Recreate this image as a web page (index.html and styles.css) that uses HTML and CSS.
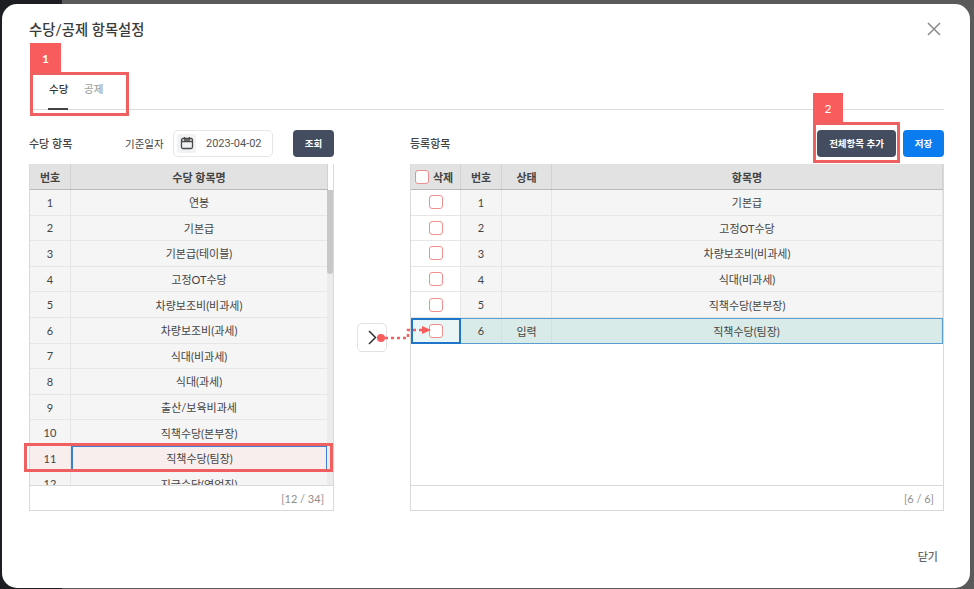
FILE: index.html
```html
<!DOCTYPE html>
<html lang="ko">
<head>
<meta charset="utf-8">
<title>수당/공제 항목설정</title>
<link rel="stylesheet" href="styles.css">
</head>
<body>
<div class="modal">
  <header class="modal-head">
    <h1 class="title">수당/공제 항목설정</h1>
    <svg class="close" width="14" height="14" viewBox="0 0 14 14"><path d="M1 1l12 12M13 1L1 13" stroke="#8a8a8a" stroke-width="1.5" fill="none"/></svg>
  </header>
  <nav class="tabs">
    <span class="tab active">수당</span>
    <span class="tab">공제</span>
  </nav>
  <section class="content">
    <div class="toolbar left-tools">
      <strong class="label">수당 항목</strong>
      <span class="date-label">기준일자</span>
      <div class="date">
        <span class="date-icon"><svg width="14" height="14" viewBox="0 0 14 14" fill="none" stroke="#4a4a4a" stroke-width="1.3"><rect x="1.5" y="2.5" width="11" height="10" rx="1.5"/><path d="M1.5 5.5h11M4.500 1v2.500M9.500 1v2.500"/><path d="M4 4h6" stroke-width="1.500"/></svg></span>
        <span class="date-value">2023-04-02</span>
      </div>
      <button class="btn dark search">조회</button>
    </div>
    <div></div>
    <div class="toolbar right-tools">
      <strong class="label">등록항목</strong>
      <button class="btn dark add">전체항목 추가</button>
      <button class="btn blue save">저장</button>
    </div>

    <div class="grid">
      <div class="row head lcols"><span>번호</span><span>수당 항목명</span></div>
      <div class="body">
        <div class="row lcols"><span>1</span><span>연봉</span></div>
        <div class="row lcols"><span>2</span><span>기본급</span></div>
        <div class="row lcols"><span>3</span><span>기본급(테이블)</span></div>
        <div class="row lcols"><span>4</span><span>고정OT수당</span></div>
        <div class="row lcols"><span>5</span><span>차량보조비(비과세)</span></div>
        <div class="row lcols"><span>6</span><span>차량보조비(과세)</span></div>
        <div class="row lcols"><span>7</span><span>식대(비과세)</span></div>
        <div class="row lcols"><span>8</span><span>식대(과세)</span></div>
        <div class="row lcols"><span>9</span><span>출산/보육비과세</span></div>
        <div class="row lcols"><span>10</span><span>직책수당(본부장)</span></div>
        <div class="row lcols picked"><span>11</span><span class="focus">직책수당(팀장)</span></div>
        <div class="row lcols"><span>12</span><span>지급수당(영업직)</span></div>
        <div class="scrollbar"><i></i></div>
      </div>
      <div class="foot">[12 / 34]</div>
    </div>

    <div class="move">
      <button class="move-btn"><svg width="9" height="15" viewBox="0 0 9 15"><path d="M1 1l6.500 6.500L1 14" fill="none" stroke="#333" stroke-width="1.500"/></svg></button>
    </div>

    <div class="grid">
      <div class="row head rcols"><span class="check-head"><i class="cb"></i>삭제</span><span>번호</span><span>상태</span><span>항목명</span></div>
      <div class="body">
        <div class="row rcols"><span class="white"><i class="cb"></i></span><span>1</span><span></span><span>기본급</span></div>
        <div class="row rcols"><span class="white"><i class="cb"></i></span><span>2</span><span></span><span>고정OT수당</span></div>
        <div class="row rcols"><span class="white"><i class="cb"></i></span><span>3</span><span></span><span>차량보조비(비과세)</span></div>
        <div class="row rcols"><span class="white"><i class="cb"></i></span><span>4</span><span></span><span>식대(비과세)</span></div>
        <div class="row rcols"><span class="white"><i class="cb"></i></span><span>5</span><span></span><span>직책수당(본부장)</span></div>
        <div class="row rcols added"><span class="cell-focus"><i class="cb"></i></span><span>6</span><span>입력</span><span>직책수당(팀장)</span></div>
      </div>
      <div class="foot">[6 / 6]</div>
    </div>
  </section>
  <footer class="modal-foot"><span class="close-text">닫기</span></footer>
</div>

<div class="mark badge b1">1</div>
<div class="mark box x1"></div>
<div class="mark badge b2">2</div>
<div class="mark box x2"></div>
<div class="mark box x3"></div>
<svg class="mark flow" width="60" height="24" viewBox="0 0 60 24">
  <circle cx="5" cy="16" r="4" fill="#f95c5c"/>
  <path d="M9 16H32V8H46" fill="none" stroke="#f06060" stroke-width="2.500" stroke-dasharray="3 3"/>
  <path d="M46 4l9 4-9 4z" fill="#f95c5c"/>
</svg>
</body>
</html>
```
FILE: styles.css
```css
* { box-sizing: border-box; }
html, body { margin: 0; height: 100%; }
body {
  width: 974px;
  height: 589px;
  overflow: hidden;
  padding: 4px 4px 1px 2px;
  background: linear-gradient(90deg, #1d1e22 0, #1d1e22 62px, #5a5a5a 62px, #5a5a5a 100%);
  font-family: Lato, "Noto Sans CJK KR", sans-serif;
  font-size: 11px;
  color: #444;
  position: relative;
}
.modal {
  height: 584px;
  background: #fff;
  border-radius: 15px;
  padding: 0 26px 0 27px;
  display: flex;
  flex-direction: column;
}
.modal-head {
  height: 50px;
  padding-bottom: 1px;
  display: flex;
  justify-content: space-between;
  align-items: center;
}
.title {
  margin: 0;
  font-size: 14.300px;
  font-weight: 500;
  color: #3a3a3a;
}
.close { margin-right: 3px; }
.tabs {
  height: 56px;
  padding: 21px 0 0 19px;
  display: flex;
  gap: 15px;
  border-bottom: 1px solid #dcdcdc;
}
.tab {
  width: 20px;
  height: 35px;
  font-size: 10.500px;
  line-height: 28px;
  text-indent: 1px;
  font-weight: 500;
  color: #a3a3a3;
  white-space: nowrap;
}
.tab.active {
  color: #333;
  border-bottom: 2px solid #444;
}
.content {
  display: grid;
  grid-template-columns: 305px 76px 534px;
  grid-template-rows: 28px 347px;
  row-gap: 7px;
  padding-top: 19px;
}
.toolbar { display: flex; align-items: center; }
.label { font-size: 11px; font-weight: 500; color: #444; }
.left-tools .label { width: 96px; }
.date-label { width: 48px; font-size: 10.500px; color: #444; }
.date {
  width: 100px;
  height: 27px;
  display: flex;
  align-items: center;
  gap: 10px;
  padding-left: 3px;
  border: 1px solid #e6e6e6;
  border-radius: 5px;
}
.date-icon {
  width: 19px;
  height: 19px;
  display: flex;
  align-items: center;
  justify-content: center;
  background: #f1f2f4;
  border-radius: 3px;
}
.date-value { font-family: Roboto, sans-serif; font-size: 11px; color: #555; }
.btn {
  height: 27px;
  border: 0;
  border-radius: 4px;
  color: #fff;
  font-family: inherit;
  font-size: 9.500px;
  font-weight: 700;
  padding: 0;
}
.dark { background: #444c60; }
.blue { background: #0a7cf0; }
.search { width: 41px; margin-left: 20px; }
.right-tools .label { margin-right: auto; }
.add { width: 79px; margin-right: 7px; }
.save { width: 41px; }

.grid {
  height: 347px;
  display: flex;
  flex-direction: column;
  border: 1px solid #d9d9d9;
  border-top: 0;
}
.row {
  display: grid;
  height: 25.600px;
  align-items: stretch;
  background: #f5f5f5;
  border-bottom: 1px solid #e6e6e6;
}
.row > span {
  display: flex;
  align-items: center;
  justify-content: center;
  border-right: 1px solid #e6e6e6;
  min-width: 0;
  white-space: nowrap;
}
.lcols { grid-template-columns: 41px 257px; width: 298px; }
.rcols { grid-template-columns: 50px 41px 50px 1fr; }
.head {
  height: 26px;
  background: #e2e2e2;
  border-bottom: 1px solid #b9b9b9;
  font-weight: 700;
  color: #444;
}
.head > span { border-right-color: #d2d2d2; }
.body {
  position: relative;
  flex: 1;
  overflow: hidden;
}
.foot {
  height: 25px;
  display: flex;
  align-items: center;
  justify-content: flex-end;
  padding-right: 9px;
  border-top: 1px solid #d9d9d9;
  color: #8f8f8f;
  font-size: 11px;
}
.scrollbar {
  position: absolute;
  top: -26px;
  right: 0;
  bottom: 0;
  width: 6px;
  background: #ececec;
}
.scrollbar i {
  display: block;
  height: 110px;
  background: #c8c8c8;
  border-radius: 3px;
}
.grid:first-of-type { position: relative; }
.picked { background: #f9eeee; }
.picked .focus {
  border: 1px solid #3d7fd6;
  border-width: 1px 2px 2px 2px;
}
.added { background: #d9ebe8; border: 1px solid #5a9fd0; border-width: 1px 1px 1px 0; }
.added > span { border-right-color: #d0e2df; }
.cell-focus {
  background: #e9f6f5;
  border: 2px solid #1f76c8 !important;
  margin: -1px 0;
}
.white { background: #fff; }
.cb {
  display: block;
  flex: none;
  width: 14px;
  height: 14px;
  border: 1px solid #ef8f8f;
  border-radius: 3px;
  background: #fff;
}
.check-head { gap: 4px; padding-right: 3px; }
.move { display: flex; padding: 159px 0 0 23px; align-items: flex-start; }
.move-btn {
  width: 30px;
  height: 29px;
  padding: 0 0 0 1px;
  border: 1px solid #e2e2e2;
  border-radius: 5px;
  background: #fff;
  display: flex;
  align-items: center;
  justify-content: center;
}
.modal-foot {
  flex: 1;
  display: flex;
  justify-content: flex-end;
  align-items: flex-start;
  padding: 37px 6px 0 0;
}
.close-text { font-size: 11px; font-weight: 500; color: #666; }

/* annotations drawn over the screenshot */
.mark { position: absolute; }
.badge {
  background: #f95c5c;
  color: #fff;
  font-size: 12px;
  font-weight: 700;
  display: flex;
  align-items: center;
  justify-content: center;
}
.b1 { left: 30px; top: 43px; width: 31px; height: 30px; }
.b2 { left: 813px; top: 93px; width: 30px; height: 30px; font-weight: 400; }
.box { border: 3px solid #f06060; }
.x1 { left: 30px; top: 72px; width: 99px; height: 44px; }
.x2 { left: 813px; top: 122px; width: 87px; height: 41px; }
.x3 { left: 24px; top: 443px; width: 309px; height: 29px; }
.flow { left: 376px; top: 322px; }
```
